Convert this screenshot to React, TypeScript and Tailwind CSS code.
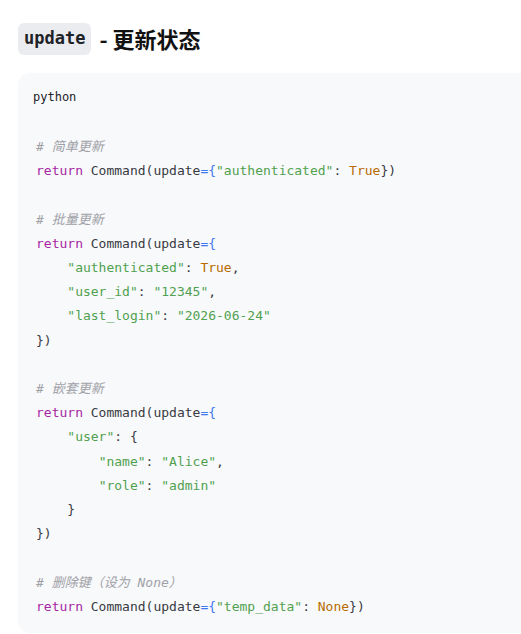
import React from "react";

const K = ({ c }: { c: string }) => <span className="text-[#a626a4]">{c}</span>;
const S = ({ c }: { c: string }) => <span className="text-[#50a14f]">{c}</span>;
const B = ({ c }: { c: string }) => <span className="text-[#4078f2]">{c}</span>;
const N = ({ c }: { c: string }) => <span className="text-[#b76b01]">{c}</span>;
const C = ({ c }: { c: string }) => <span className="text-[#a0a1a7] italic">{c}</span>;

export default function App() {
  return (
    <div className="w-[521px] h-[634px] overflow-hidden bg-white pl-[18px]">
      <div className="mt-[23px] flex items-center h-[32px] gap-[8px]">
        <span
          className="h-[32px] flex items-center px-[6px] rounded-[6px] bg-[#eaecef] text-[17px] font-semibold text-[#1f2328]"
          style={{ fontFamily: '"DejaVu Sans Mono", monospace' }}
        >
          update
        </span>
        <span
          className="text-[22px] font-bold text-[#111] -mt-[2px]"
          style={{ fontFamily: '"Noto Sans CJK SC", "Noto Sans", sans-serif' }}
        >
          - 更新状态
        </span>
      </div>
      <div className="mt-[18px] w-[540px] h-[560px] rounded-[12px] bg-[#f8f9fb] pt-[12px] px-[18px]">
        <div
          className="text-[12px] leading-[24px] text-[#1f2328] -ml-[3px]"
          style={{ fontFamily: '"DejaVu Sans Mono", monospace' }}
        >
          python
        </div>
        <pre
          className="mt-[26px] text-[13px] leading-[24.2px] text-[#383a42]"
          style={{ fontFamily: '"DejaVu Sans Mono", "Noto Sans CJK SC", monospace' }}
        >
          <C c="# 简单更新" />
          {"\n"}
          <K c="return" /> Command(update<B c="={" />
          <S c={'"authenticated"'} />: <N c="True" />
          {"})\n\n"}
          <C c="# 批量更新" />
          {"\n"}
          <K c="return" /> Command(update<B c="={" />
          {"\n    "}
          <S c={'"authenticated"'} />: <N c="True" />
          {",\n    "}
          <S c={'"user_id"'} />: <S c={'"12345"'} />
          {",\n    "}
          <S c={'"last_login"'} />: <S c={'"2026-06-24"'} />
          {"\n})\n\n"}
          <C c="# 嵌套更新" />
          {"\n"}
          <K c="return" /> Command(update<B c="={" />
          {"\n    "}
          <S c={'"user"'} />
          {": {\n        "}
          <S c={'"name"'} />: <S c={'"Alice"'} />
          {",\n        "}
          <S c={'"role"'} />: <S c={'"admin"'} />
          {"\n    }\n})\n\n"}
          <C c="# 删除键（设为 None）" />
          {"\n"}
          <K c="return" /> Command(update<B c="={" />
          <S c={'"temp_data"'} />: <N c="None" />
          {"})"}
        </pre>
      </div>
    </div>
  );
}
